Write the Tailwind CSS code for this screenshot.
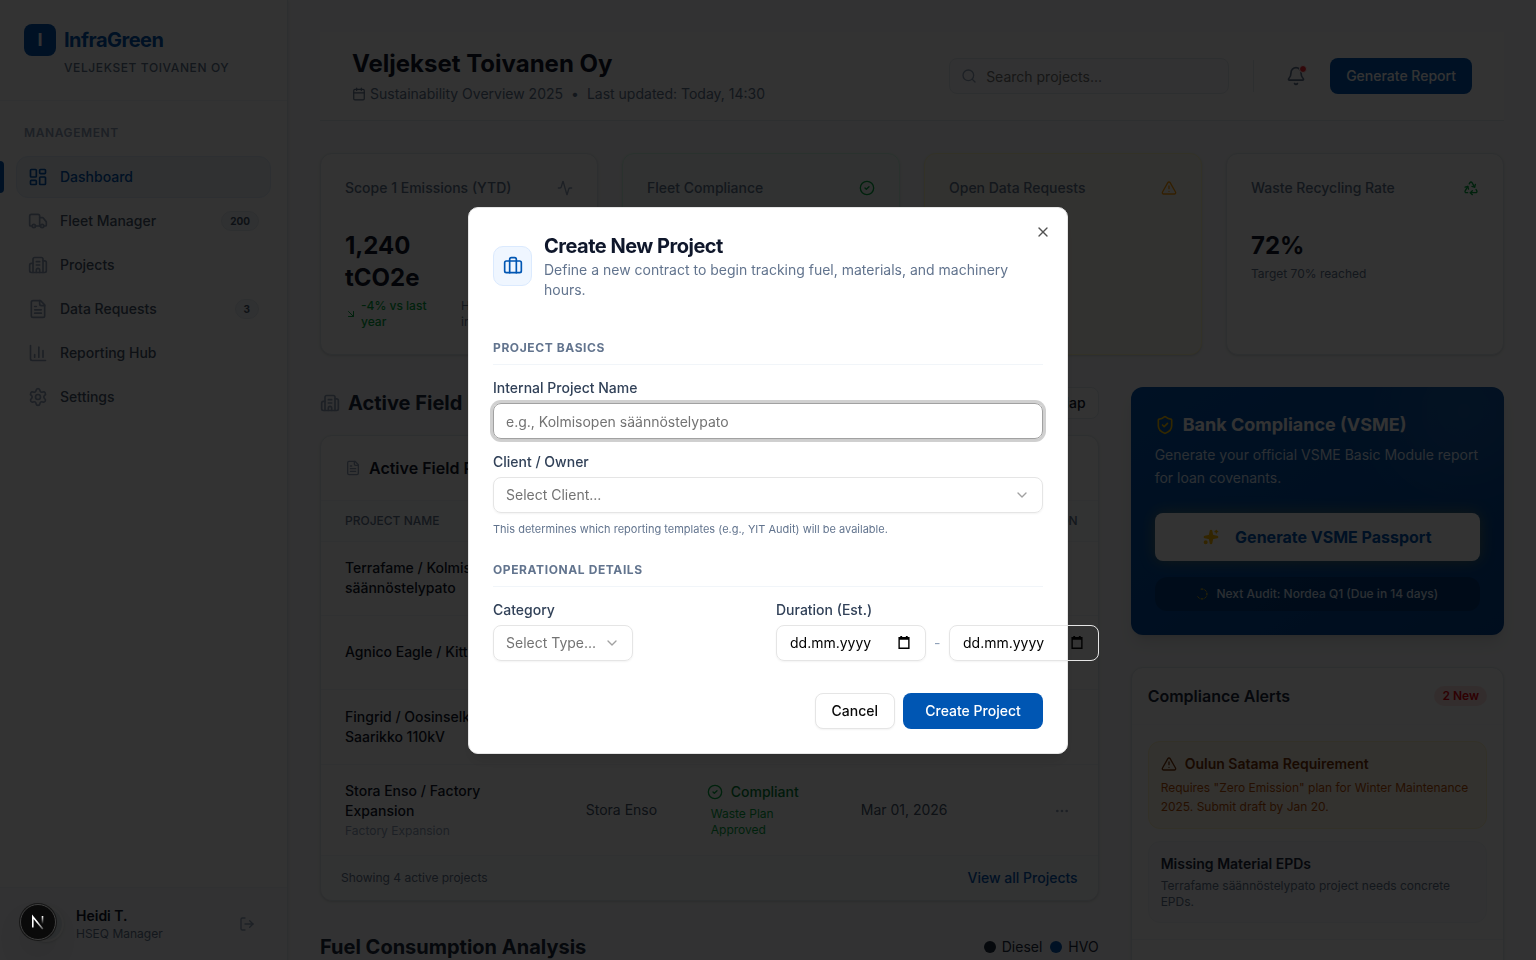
<!DOCTYPE html>
<html lang="en">
<head>
<meta charset="utf-8">
<meta name="viewport" content="width=device-width, initial-scale=1">
<title>InfraGreen – Dashboard</title>
<script src="https://cdn.jsdelivr.net/npm/@tailwindcss/browser@4"></script>
</head>
<body class="h-screen overflow-hidden bg-slate-50 font-['Inter',sans-serif] text-sm text-slate-900 antialiased">
<svg class="hidden" aria-hidden="true">
  <symbol id="dashboard" viewBox="0 0 24 24"><rect width="7" height="9" x="3" y="3" rx="1"/><rect width="7" height="5" x="14" y="3" rx="1"/><rect width="7" height="9" x="14" y="12" rx="1"/><rect width="7" height="5" x="3" y="16" rx="1"/></symbol>
  <symbol id="truck" viewBox="0 0 24 24"><path d="M14 18V6a2 2 0 0 0-2-2H4a2 2 0 0 0-2 2v11a1 1 0 0 0 1 1h2"/><path d="M15 18H9"/><path d="M19 18h2a1 1 0 0 0 1-1v-3.65a1 1 0 0 0-.22-.624l-3.48-4.35A1 1 0 0 0 17.52 8H14"/><circle cx="17" cy="18" r="2"/><circle cx="7" cy="18" r="2"/></symbol>
  <symbol id="building" viewBox="0 0 24 24"><path d="M10 12h4"/><path d="M10 8h4"/><path d="M14 21v-3a2 2 0 0 0-4 0v3"/><path d="M6 10H4a2 2 0 0 0-2 2v7a2 2 0 0 0 2 2h16a2 2 0 0 0 2-2V9a2 2 0 0 0-2-2h-2"/><path d="M6 21V5a2 2 0 0 1 2-2h8a2 2 0 0 1 2 2v16"/></symbol>
  <symbol id="file" viewBox="0 0 24 24"><path d="M15 2H6a2 2 0 0 0-2 2v16a2 2 0 0 0 2 2h12a2 2 0 0 0 2-2V7Z"/><path d="M14 2v4a2 2 0 0 0 2 2h4"/><path d="M10 9H8"/><path d="M16 13H8"/><path d="M16 17H8"/></symbol>
  <symbol id="chart" viewBox="0 0 24 24"><path d="M3 3v16a2 2 0 0 0 2 2h16"/><path d="M18 17V9"/><path d="M13 17V5"/><path d="M8 17v-3"/></symbol>
  <symbol id="gear" viewBox="0 0 24 24"><path d="M9.671 4.136a2.34 2.34 0 0 1 4.659 0 2.34 2.34 0 0 0 3.319 1.915 2.34 2.34 0 0 1 2.33 4.033 2.34 2.34 0 0 0 0 3.831 2.34 2.34 0 0 1-2.33 4.033 2.34 2.34 0 0 0-3.319 1.915 2.34 2.34 0 0 1-4.659 0 2.34 2.34 0 0 0-3.32-1.915 2.34 2.34 0 0 1-2.33-4.033 2.34 2.34 0 0 0 0-3.831A2.34 2.34 0 0 1 6.35 6.051a2.34 2.34 0 0 0 3.319-1.915"/><circle cx="12" cy="12" r="3"/></symbol>
  <symbol id="logout" viewBox="0 0 24 24"><path d="m16 17 5-5-5-5"/><path d="M21 12H9"/><path d="M9 21H5a2 2 0 0 1-2-2V5a2 2 0 0 1 2-2h4"/></symbol>
  <symbol id="calendar" viewBox="0 0 24 24"><path d="M8 2v4"/><path d="M16 2v4"/><rect width="18" height="18" x="3" y="4" rx="2"/><path d="M3 10h18"/></symbol>
  <symbol id="search" viewBox="0 0 24 24"><path d="m21 21-4.34-4.34"/><circle cx="11" cy="11" r="8"/></symbol>
  <symbol id="bell" viewBox="0 0 24 24"><path d="M10.268 21a2 2 0 0 0 3.464 0"/><path d="M3.262 15.326A1 1 0 0 0 4 17h16a1 1 0 0 0 .74-1.673C19.41 13.956 18 12.499 18 8A6 6 0 0 0 6 8c0 4.499-1.411 5.956-2.738 7.326"/></symbol>
  <symbol id="activity" viewBox="0 0 24 24"><path d="M22 12h-2.48a2 2 0 0 0-1.93 1.46l-2.35 8.36a.25.25 0 0 1-.48 0L9.24 2.18a.25.25 0 0 0-.48 0l-2.35 8.36A2 2 0 0 1 4.49 12H2"/></symbol>
  <symbol id="check" viewBox="0 0 24 24"><circle cx="12" cy="12" r="10"/><path d="m9 12 2 2 4-4"/></symbol>
  <symbol id="warn" viewBox="0 0 24 24"><path d="m21.73 18-8-14a2 2 0 0 0-3.48 0l-8 14A2 2 0 0 0 4 21h16a2 2 0 0 0 1.73-3"/><path d="M12 9v4"/><path d="M12 17h.01"/></symbol>
  <symbol id="recycle" viewBox="0 0 24 24"><path d="M7 19H4.815a1.83 1.83 0 0 1-1.57-.881 1.785 1.785 0 0 1-.004-1.784L7.196 9.5"/><path d="M11 19h8.203a1.83 1.83 0 0 0 1.556-.89 1.784 1.784 0 0 0 0-1.775l-1.226-2.12"/><path d="m14 16-3 3 3 3"/><path d="M8.293 13.596 7.196 9.5 3.1 10.598"/><path d="m9.344 5.811 1.093-1.892A1.83 1.83 0 0 1 11.985 3a1.784 1.784 0 0 1 1.546.888l3.943 6.843"/><path d="m13.378 9.633 4.096 1.098 1.097-4.096"/></symbol>
  <symbol id="downright" viewBox="0 0 24 24"><path d="m7 7 10 10"/><path d="M17 7v10H7"/></symbol>
  <symbol id="shield" viewBox="0 0 24 24"><path d="M20 13c0 5-3.5 7.5-7.66 8.95a1 1 0 0 1-.67-.01C7.5 20.5 4 18 4 13V6a1 1 0 0 1 1-1c2 0 4.500-1.200 6.240-2.720a1.170 1.170 0 0 1 1.520 0C14.510 3.810 17 5 19 5a1 1 0 0 1 1 1z"/><path d="m9 12 2 2 4-4"/></symbol>
  <symbol id="sparkles" viewBox="0 0 24 24"><path d="M11.017 2.814a1 1 0 0 1 1.966 0l1.051 5.558a2 2 0 0 0 1.594 1.594l5.558 1.051a1 1 0 0 1 0 1.966l-5.558 1.051a2 2 0 0 0-1.594 1.594l-1.051 5.558a1 1 0 0 1-1.966 0l-1.051-5.558a2 2 0 0 0-1.594-1.594l-5.558-1.051a1 1 0 0 1 0-1.966l5.558-1.051a2 2 0 0 0 1.594-1.594z"/><path d="M20 2v4"/><path d="M22 4h-4"/><circle cx="4" cy="20" r="2"/></symbol>
  <symbol id="loader" viewBox="0 0 24 24"><path d="M10.100 2.182a10 10 0 0 1 3.800 0M17.600 3.720a10 10 0 0 1 2.700 2.690M21.820 10.100a10 10 0 0 1 0 3.800M20.290 17.600a10 10 0 0 1-2.700 2.690M13.900 21.820a10 10 0 0 1-3.800 0M6.400 20.290a10 10 0 0 1-2.690-2.700"/></symbol>
  <symbol id="case" viewBox="0 0 24 24"><path d="M16 20V4a2 2 0 0 0-2-2h-4a2 2 0 0 0-2 2v16"/><rect width="20" height="14" x="2" y="6" rx="2"/></symbol>
  <symbol id="down" viewBox="0 0 24 24"><path d="m6 9 6 6 6-6"/></symbol>
  <symbol id="close" viewBox="0 0 24 24"><path d="M18 6 6 18"/><path d="m6 6 12 12"/></symbol>
  <symbol id="dots" viewBox="0 0 24 24"><circle cx="12" cy="12" r="1"/><circle cx="19" cy="12" r="1"/><circle cx="5" cy="12" r="1"/></symbol>
  <symbol id="datepick" viewBox="0 0 12 14"><path d="M2 0h2v1h4V0h2v1h2v13H0V1h2zM1.500 4v8.500h9V4z" fill="currentColor" stroke="none"/></symbol>
</svg>

<div class="flex h-full fill-none stroke-current stroke-2 [stroke-linecap:round] [stroke-linejoin:round]">
  <aside class="flex w-72 shrink-0 flex-col border-r border-slate-200 bg-white shadow-sm">
    <div class="h-[101px] border-b border-slate-100 p-6">
      <div class="flex items-center gap-2">
        <span class="flex size-8 items-center justify-center rounded-lg bg-[#0056b3] text-lg font-bold text-white">I</span>
        <span class="text-xl font-bold tracking-tight text-[#0056b3]">InfraGreen</span>
      </div>
      <p class="mt-1 pl-10 text-xs font-medium tracking-wider text-slate-500">VELJEKSET TOIVANEN OY</p>
    </div>
    <nav class="flex-1 px-4 pt-6">
      <p class="mb-[15px] px-2 text-xs leading-4 font-semibold tracking-wider text-slate-400">MANAGEMENT</p>
      <ul class="flex flex-col gap-0.5 font-medium text-slate-600">
        <li class="relative before:absolute before:top-[5px] before:-left-4 before:h-8 before:w-1 before:rounded-r before:bg-[#0056b3]"><a href="#" class="flex h-[42px] items-center gap-3 rounded-xl border border-[#dfeaf7] bg-[#edf4fa] px-[11px] text-[#0056b3]"><svg class="size-5"><use href="#dashboard"/></svg>Dashboard</a></li>
        <li><a href="#" class="flex h-[42px] items-center gap-3 px-3"><svg class="size-5 text-slate-400"><use href="#truck"/></svg>Fleet Manager<span class="ml-auto rounded-full border border-slate-200 bg-slate-100 px-2 text-[10px] leading-[18px] font-bold">200</span></a></li>
        <li><a href="#" class="flex h-[42px] items-center gap-3 px-3"><svg class="size-5 text-slate-400"><use href="#building"/></svg>Projects</a></li>
        <li><a href="#" class="flex h-[42px] items-center gap-3 px-3"><svg class="size-5 text-slate-400"><use href="#file"/></svg>Data Requests<span class="ml-auto rounded-full border border-slate-200 bg-slate-100 px-2 text-[10px] leading-[18px] font-bold">3</span></a></li>
        <li><a href="#" class="flex h-[42px] items-center gap-3 px-3"><svg class="size-5 text-slate-400"><use href="#chart"/></svg>Reporting Hub</a></li>
        <li><a href="#" class="flex h-[42px] items-center gap-3 px-3"><svg class="size-5 text-slate-400"><use href="#gear"/></svg>Settings</a></li>
      </ul>
    </nav>
    <div class="flex items-center gap-3 border-t border-slate-100 bg-slate-50 py-[18px] pr-8 pl-7">
      <span class="size-9 rounded-full border-2 border-white bg-slate-200 shadow-sm"></span>
      <div class="flex-1">
        <p class="leading-5 font-semibold">Heidi T.</p>
        <p class="text-xs leading-4 text-slate-500">HSEQ Manager</p>
      </div>
      <button aria-label="Log out" class="text-slate-400"><svg class="size-4"><use href="#logout"/></svg></button>
    </div>
  </aside>

  <main class="min-w-0 flex-1 overflow-hidden p-8">
    <header class="flex items-center border-b border-slate-200 bg-white/80 px-8 py-4">
      <div>
        <h1 class="text-2xl font-bold">Veljekset Toivanen Oy</h1>
        <p class="mt-1 flex items-center text-slate-500"><svg class="mr-1 size-3.5"><use href="#calendar"/></svg>Sustainability Overview 2025<span class="mx-2">•</span>Last updated: Today, 14:30</p>
      </div>
      <div class="ml-auto flex items-center gap-6">
        <div class="relative">
          <svg class="absolute top-2.5 left-3 size-4 text-slate-400"><use href="#search"/></svg>
          <input type="search" aria-label="Search projects" placeholder="Search projects..." class="block h-9 w-[280px] rounded-lg border border-slate-200 bg-slate-50 pr-3 pl-9 placeholder:text-neutral-500">
        </div>
        <span class="h-8 w-px bg-slate-200"></span>
        <div class="flex items-center gap-4">
          <button aria-label="Notifications" class="relative flex size-9 items-center justify-center text-slate-500"><svg class="size-5"><use href="#bell"/></svg><span class="absolute top-[7px] right-[7px] size-2 rounded-full border border-white bg-red-500"></span></button>
          <button class="h-9 rounded-lg bg-[#0056b3] px-4 font-medium text-white">Generate Report</button>
        </div>
      </div>
    </header>

    <section class="mt-8 grid grid-cols-4 gap-6">
      <article class="rounded-xl border border-slate-200 bg-white p-6 shadow-sm">
        <div class="flex items-center justify-between font-medium text-slate-500"><h2>Scope 1 Emissions (YTD)</h2><svg class="size-4 text-slate-400"><use href="#activity"/></svg></div>
        <p class="mt-8 w-24 text-2xl leading-8 font-bold">1,240 tCO2e</p>
        <div class="mt-1 flex items-center gap-1 text-xs">
          <svg class="size-3 shrink-0 text-green-600"><use href="#downright"/></svg>
          <span class="mr-4 w-20 shrink-0 font-medium text-green-600">-4% vs last year</span>
          <span class="text-slate-500">High use<br>in winter</span>
        </div>
      </article>
      <article class="rounded-xl border border-emerald-100 bg-emerald-50/40 p-6 shadow-sm">
        <div class="flex items-center justify-between font-medium text-slate-500"><h2>Fleet Compliance</h2><svg class="size-4 text-green-600"><use href="#check"/></svg></div>
      </article>
      <article class="rounded-xl border border-yellow-100 bg-[#fbfaf0] p-6 shadow-sm">
        <div class="flex items-center justify-between font-medium text-slate-500"><h2>Open Data Requests</h2><svg class="size-4 text-amber-500"><use href="#warn"/></svg></div>
      </article>
      <article class="rounded-xl border border-slate-200 bg-white p-6 shadow-sm">
        <div class="flex items-center justify-between font-medium text-slate-500"><h2>Waste Recycling Rate</h2><svg class="size-4 text-green-600"><use href="#recycle"/></svg></div>
        <p class="mt-8 text-2xl leading-8 font-bold">72%</p>
        <p class="mt-1 text-xs text-slate-500">Target 70% reached</p>
      </article>
    </section>

    <div class="mt-8 grid grid-cols-3 items-start gap-8">
      <div class="col-span-2">
        <div class="flex items-center gap-2">
          <svg class="size-5 text-slate-400"><use href="#building"/></svg>
          <h2 class="text-xl font-bold text-slate-800">Active Field Projects</h2>
          <button class="ml-auto h-8 rounded-lg border border-slate-200 bg-white px-3 font-medium">View Map</button>
        </div>
        <section class="mt-4 overflow-hidden rounded-xl border border-slate-200 bg-white shadow-sm">
          <h3 class="flex items-center gap-2 border-b border-slate-100 px-6 py-5 text-base font-semibold"><svg class="size-4 text-slate-400"><use href="#file"/></svg>Active Field Projects</h3>
          <table class="w-full table-fixed text-left">
            <colgroup><col class="w-[31%]"><col class="w-[121px]"><col class="w-[154px]"><col class="w-[20%]"><col></colgroup>
            <thead class="border-b border-slate-100 bg-slate-50/50 text-xs text-slate-500">
              <tr class="h-10"><th class="px-6 font-medium">PROJECT NAME</th><th class="px-6 font-medium">CLIENT</th><th class="px-6 font-medium">STATUS</th><th class="px-6 font-medium">DEADLINE</th><th class="px-5 text-right font-medium">ACTION</th></tr>
            </thead>
            <tbody class="text-slate-600">
              <tr class="h-[74px] border-b border-slate-100"><td class="px-6 font-medium text-slate-900">Terrafame / Kolmisopen säännöstelypato</td><td></td><td></td><td></td><td></td></tr>
              <tr class="h-[74px] border-b border-slate-100"><td class="px-6 font-medium text-slate-900">Agnico Eagle / Kittilä</td><td></td><td></td><td></td><td></td></tr>
              <tr class="h-[75px] border-b border-slate-100"><td class="px-6 font-medium text-slate-900">Fingrid / Oosinselkä-Saarikko 110kV</td><td></td><td></td><td></td><td></td></tr>
              <tr class="border-b border-slate-100">
                <td class="px-6 py-4 font-medium text-slate-900">Stora Enso / Factory Expansion<span class="mt-0.5 block text-xs font-normal text-slate-400">Factory Expansion</span></td>
                <td class="px-6">Stora Enso</td>
                <td class="pl-6 text-green-600"><span class="flex items-center gap-2 font-medium text-green-700"><svg class="size-4 text-green-600"><use href="#check"/></svg>Compliant</span><span class="mt-1 ml-1 block w-20 text-xs">Waste Plan Approved</span></td>
                <td class="px-6">Mar 01, 2026</td>
                <td class="px-7 text-right"><button aria-label="More actions" class="align-middle text-slate-400"><svg class="size-4"><use href="#dots"/></svg></button></td>
              </tr>
            </tbody>
          </table>
          <div class="flex h-11 items-center justify-between bg-slate-50/60 px-5 text-xs text-slate-500">Showing 4 active projects<a href="#" class="text-sm font-medium text-[#0056b3]">View all Projects</a></div>
        </section>
        <div class="mt-8 flex items-center justify-between">
          <h2 class="text-xl font-bold text-slate-800">Fuel Consumption Analysis</h2>
          <div class="flex items-center gap-2 text-slate-800">
            <span class="flex items-center gap-1.5"><span class="size-3 rounded-full bg-slate-800"></span>Diesel</span>
            <span class="flex items-center gap-1.5"><span class="size-3 rounded-full bg-[#0056b3]"></span>HVO</span>
          </div>
        </div>
      </div>

      <div>
        <section class="relative overflow-hidden rounded-xl bg-linear-to-br from-[#0056b3] to-[#004494] p-6 text-white shadow-lg">
          <span class="absolute -top-10 -right-6 size-32 rounded-full bg-white/10 blur-2xl"></span>
          <h2 class="flex items-center gap-2 text-lg leading-7 font-bold"><svg class="size-5 text-yellow-400"><use href="#shield"/></svg>Bank Compliance (VSME)</h2>
          <p class="mt-1 leading-[23px] text-blue-100">Generate your official VSME Basic Module report for loan covenants.</p>
          <button class="mt-6 flex h-12 w-full items-center justify-center gap-4 rounded-lg bg-white text-base font-bold text-[#0056b3] shadow-[0_0_15px_rgba(250,204,21,0.4)]"><svg class="size-4 fill-amber-400 text-amber-400"><use href="#sparkles"/></svg>Generate VSME Passport</button>
          <p class="mt-4 flex items-center justify-center gap-2 rounded-xl bg-black/20 py-[9px] text-xs font-medium text-blue-100"><svg class="size-3 text-yellow-400"><use href="#loader"/></svg>Next Audit: Nordea Q1 (Due in 14 days)</p>
        </section>
        <section class="mt-8 rounded-xl border border-slate-200 bg-white shadow-sm">
          <div class="flex items-center justify-between border-b border-slate-50 p-4">
            <h2 class="text-base font-semibold text-slate-800">Compliance Alerts</h2>
            <span class="rounded-full bg-red-100 px-2 text-xs leading-5 font-semibold text-red-600">2 New</span>
          </div>
          <div class="flex flex-col gap-3 p-4">
            <div class="rounded-xl border border-amber-100 bg-amber-50 p-3">
              <h3 class="flex items-center gap-2 font-semibold text-amber-900"><svg class="size-4"><use href="#warn"/></svg>Oulun Satama Requirement</h3>
              <p class="mt-1 text-xs leading-[19px] text-amber-700">Requires "Zero Emission" plan for Winter Maintenance 2025. Submit draft by Jan 20.</p>
            </div>
            <div class="rounded-xl border border-slate-100 bg-slate-50 p-3">
              <h3 class="font-semibold text-slate-800">Missing Material EPDs</h3>
              <p class="mt-1 text-xs text-slate-500">Terrafame säännöstelypato project needs concrete EPDs.</p>
            </div>
          </div>
          <div class="h-12 border-t border-slate-100"></div>
        </section>
      </div>
    </div>
  </main>
</div>

<div class="fixed inset-0 flex items-center justify-center bg-black/80 fill-none stroke-current stroke-2 [stroke-linecap:round] [stroke-linejoin:round]">
  <form role="dialog" aria-modal="true" aria-labelledby="dialog-title" class="relative w-full max-w-[600px] rounded-[10px] border border-neutral-200 bg-white p-6 shadow-lg">
    <button type="button" aria-label="Close" class="absolute top-4 right-4 opacity-70"><svg class="size-4 text-neutral-950"><use href="#close"/></svg></button>
    <div class="flex items-center gap-3">
      <span class="flex h-10 w-[39px] shrink-0 items-center justify-center rounded-[10px] border border-blue-100 bg-blue-50 text-[#0056b3]"><svg class="size-5"><use href="#case"/></svg></span>
      <div>
        <h2 id="dialog-title" class="text-xl font-bold tracking-tight">Create New Project</h2>
        <p class="text-slate-500">Define a new contract to begin tracking fuel, materials, and machinery hours.</p>
      </div>
    </div>

    <h3 class="mt-10 border-b border-slate-100 pb-2 text-xs font-bold tracking-wider text-slate-500">PROJECT BASICS</h3>
    <label for="project-name" class="mt-4 block leading-[14px] font-medium text-slate-700">Internal Project Name</label>
    <input id="project-name" type="text" placeholder="e.g., Kolmisopen säännöstelypato" class="mt-2 block h-9 w-full rounded-lg border border-neutral-400 bg-transparent px-3 pt-0.5 shadow-xs ring-[3px] ring-neutral-400/50 outline-none placeholder:text-neutral-500">
    <label for="client" class="mt-4 block leading-[14px] font-medium text-slate-700">Client / Owner</label>
    <div class="relative mt-2">
      <select id="client" class="block h-9 w-full appearance-none rounded-lg border border-neutral-200 bg-transparent px-3 text-neutral-500 shadow-xs"><option>Select Client...</option></select>
      <svg class="pointer-events-none absolute top-2.5 right-[13px] size-4 text-neutral-400"><use href="#down"/></svg>
    </div>
    <p class="mt-2 text-[11px] leading-[17px] text-slate-500">This determines which reporting templates (e.g., YIT Audit) will be available.</p>

    <h3 class="mt-6 border-b border-slate-100 pb-2 text-xs font-bold tracking-wider text-slate-500">OPERATIONAL DETAILS</h3>
    <div class="mt-4 grid grid-cols-2 gap-4">
      <div>
        <label for="category" class="block leading-[14px] font-medium text-slate-700">Category</label>
        <div class="relative mt-2 w-[140px]">
          <select id="category" class="block h-9 w-full appearance-none rounded-lg border border-neutral-200 bg-transparent px-3 text-neutral-500 shadow-xs"><option>Select Type...</option></select>
          <svg class="pointer-events-none absolute top-2.5 right-[13px] size-4 text-neutral-400"><use href="#down"/></svg>
        </div>
      </div>
      <div>
        <label for="start-date" class="block leading-[14px] font-medium text-slate-700">Duration (Est.)</label>
        <div class="mt-2 flex w-max items-center gap-2">
          <div class="relative w-[150px]">
            <input id="start-date" type="text" inputmode="numeric" placeholder="dd.mm.yyyy" class="block h-9 w-full rounded-lg border border-neutral-200 bg-transparent px-[13px] shadow-xs placeholder:text-black">
            <button type="button" aria-label="Pick start date" class="absolute top-[11px] right-4 text-black"><svg class="h-[13px] w-3"><use href="#datepick"/></svg></button>
          </div>
          <span class="w-[7px] text-slate-400">-</span>
          <div class="relative w-[150px]">
            <input aria-label="End date" type="text" inputmode="numeric" placeholder="dd.mm.yyyy" class="block h-9 w-full rounded-lg border border-neutral-200 bg-transparent px-[13px] shadow-xs placeholder:text-black">
            <button type="button" aria-label="Pick end date" class="absolute top-[11px] right-4 text-black"><svg class="h-[13px] w-3"><use href="#datepick"/></svg></button>
          </div>
        </div>
      </div>
    </div>

    <div class="mt-8 flex justify-end gap-2">
      <button type="button" class="h-9 rounded-lg border border-neutral-200 bg-white px-4 font-medium text-neutral-950 shadow-xs">Cancel</button>
      <button type="submit" class="h-9 min-w-[140px] rounded-lg bg-[#0056b3] px-4 font-medium text-white">Create Project</button>
    </div>
  </form>
</div>

<button aria-label="Open developer tools" class="fixed bottom-5 left-5 flex size-9 items-center justify-center rounded-full border border-neutral-700 bg-[#0a0a0a] shadow-[0_0_0_1px_#171717,0_16px_32px_-8px_rgba(0,0,0,0.24)]">
  <svg class="size-5" viewBox="0 0 20 20" fill="none" stroke-width="1.600">
    <defs>
      <linearGradient id="ng1" gradientUnits="userSpaceOnUse" x1="9" y1="10" x2="15" y2="17"><stop stop-color="#fff"/><stop offset="1" stop-color="#fff" stop-opacity="0.300"/></linearGradient>
      <linearGradient id="ng2" gradientUnits="userSpaceOnUse" x1="14" y1="4" x2="14" y2="12"><stop stop-color="#fff"/><stop offset="1" stop-color="#fff" stop-opacity="0"/></linearGradient>
    </defs>
    <path d="M4.800 15.500V4.800L14.800 17" stroke="url(#ng1)"/>
    <path d="M14.500 4v8" stroke="url(#ng2)"/>
  </svg>
</button>
</body>
</html>
